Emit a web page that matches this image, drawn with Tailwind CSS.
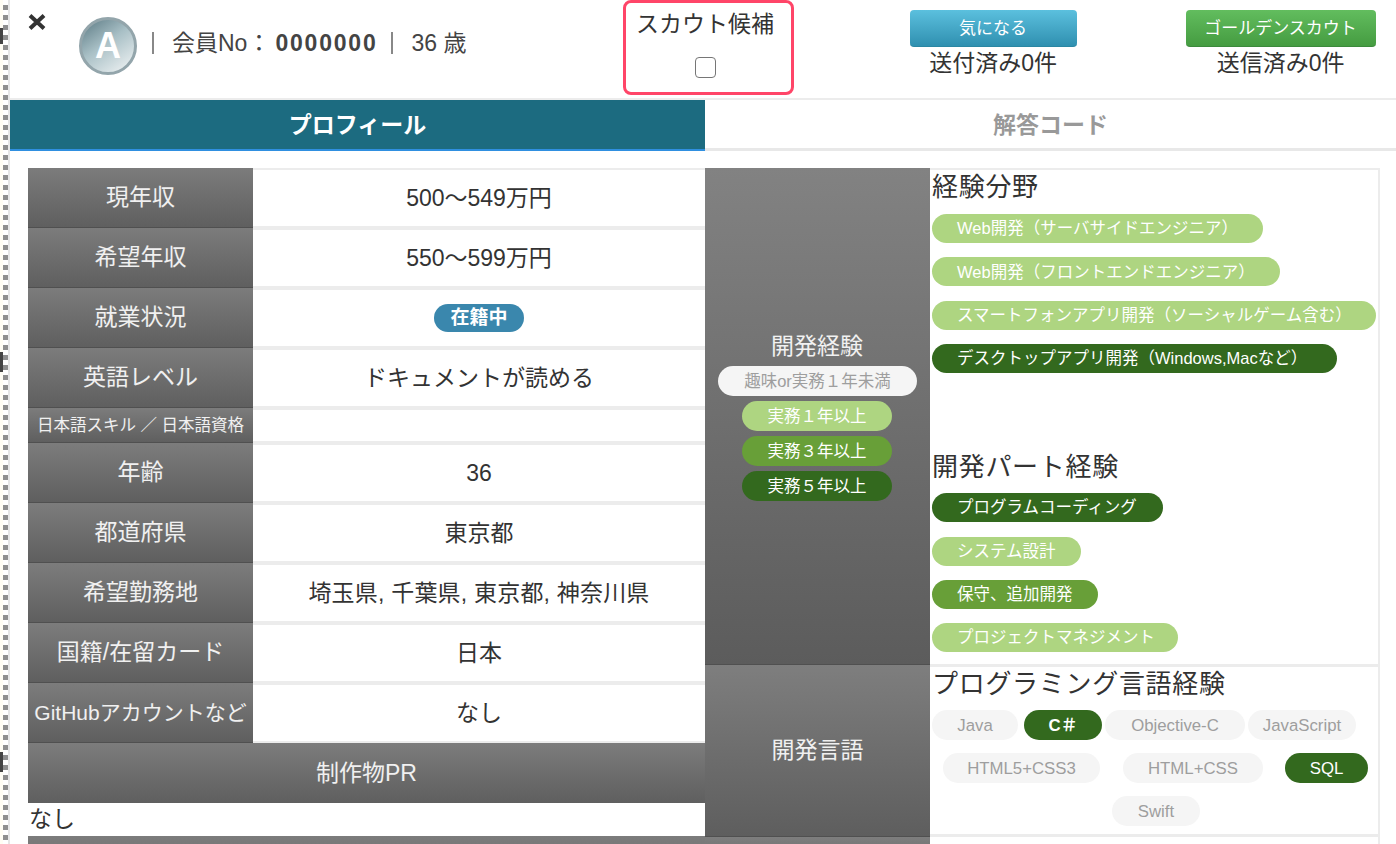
<!DOCTYPE html>
<html lang="ja">
<head>
<meta charset="utf-8">
<script src="https://cdn.jsdelivr.net/npm/@tailwindcss/browser@4"></script>
</head>
<body class="bg-white">
<div class="flex h-[844px] w-[1396px] overflow-hidden bg-white text-[#333] font-['Liberation_Sans','Noto_Sans_CJK_JP',sans-serif]">
  <div class="relative flex h-full w-[10px] shrink-0 overflow-hidden border-r-2 border-[#e6e6e6] bg-[#fffdf4]">
    <div class="ml-[3px] h-full w-[5px] bg-[repeating-linear-gradient(to_bottom,#fff_0,#fff_5px,#8f8f8f_5px,#8f8f8f_10px)]"></div>
    <span class="absolute left-0 top-[28px] h-[16px] w-[3px] bg-[#444]"></span>
    <span class="absolute left-0 top-[352px] h-[20px] w-[3px] bg-[#444]"></span>
    <span class="absolute left-0 top-[752px] h-[20px] w-[3px] bg-[#444]"></span>
  </div>
  <div class="w-[1386px] shrink-0">
    <header class="flex h-[98px] items-start">
      <svg class="ml-[18px] mt-[14px] h-[16px] w-[18px] shrink-0" viewBox="0 0 18 16"><path d="M2 1.5 L16 14.5 M16 1.5 L2 14.5" stroke="#333" stroke-width="4"/></svg>
      <div class="ml-[33px] mt-[17px] flex h-[58px] w-[58px] shrink-0 items-center justify-center rounded-full border-[3px] border-[#93a5ab] bg-[linear-gradient(145deg,#6d8a93_10%,#a9c0c6_45%,#dfe7e9_85%)] text-[36px] font-bold text-white">A</div>
      <div class="ml-[15px] mt-[30px] flex h-[26px] items-center text-[23px] leading-none text-[#444]">
        <span class="h-[22px] w-[2px] bg-[#888]"></span>
        <span class="ml-[18px]">会員No：</span>
        <span class="ml-[5px] font-bold tracking-[1.8px]">0000000</span>
        <span class="ml-[13px] h-[22px] w-[2px] bg-[#888]"></span>
        <span class="ml-[19px]">36 歳</span>
      </div>
      <div class="ml-[156px] flex h-[95px] w-[171px] shrink-0 flex-col items-center rounded-[8px] border-[3px] border-[#ff4568] bg-white pr-[6px] text-[23px]">
        <span class="mt-[6px] leading-[30px]">スカウト候補</span>
        <input type="checkbox" class="mt-[18px] h-[21px] w-[21px] appearance-none rounded-[4px] border border-[#767676] bg-white">
      </div>
      <div class="ml-[116px] mt-[10px] flex w-[167px] shrink-0 flex-col items-center">
        <button class="h-[37px] w-full rounded-[4px] border-b border-[#2a87a3] bg-gradient-to-b from-[#5bc0de] to-[#2f90b0] pt-[1px] text-[17px] text-white">気になる</button>
        <span class="mt-[1px] whitespace-nowrap text-[23px] leading-[30px]">送付済み0件</span>
      </div>
      <div class="ml-[109px] mt-[10px] flex w-[190px] shrink-0 flex-col items-center">
        <button class="h-[37px] w-full rounded-[4px] border-b border-[#3c8a3c] bg-gradient-to-b from-[#62bd5e] to-[#459c41] pt-[1px] text-[17px] text-white">ゴールデンスカウト</button>
        <span class="mt-[1px] whitespace-nowrap text-[23px] leading-[30px]">送信済み0件</span>
      </div>
    </header>
    <nav class="flex h-[53px] border-t-2 border-[#ececec] text-[23px] font-bold">
      <div class="flex w-[695px] items-center justify-center border-b-2 border-[#2f8fe0] bg-[#1c6b80] pt-[2px] text-white">プロフィール</div>
      <div class="flex flex-1 items-center justify-center border-b-[3px] border-[#e8e8e8] pt-[2px] text-[#999]">解答コード</div>
    </nav>
    <main class="ml-[18px] mt-[17px] flex">
      <section class="w-[677px] shrink-0 text-[23px]">
        <div class="flex h-[60px]"><div class="flex w-[225px] items-center justify-center border-b border-[#505050] bg-gradient-to-b from-[#7c7c7c] to-[#5f5f5f] text-white/90">現年収</div><div class="flex flex-1 items-center justify-center border-y-2 border-[#ececec]">500〜549万円</div></div>
        <div class="flex h-[60px]"><div class="flex w-[225px] items-center justify-center border-b border-[#505050] bg-gradient-to-b from-[#7c7c7c] to-[#5f5f5f] text-white/90">希望年収</div><div class="flex flex-1 items-center justify-center border-y-2 border-[#ececec]">550〜599万円</div></div>
        <div class="flex h-[60px]"><div class="flex w-[225px] items-center justify-center border-b border-[#505050] bg-gradient-to-b from-[#7c7c7c] to-[#5f5f5f] text-white/90">就業状況</div><div class="flex flex-1 items-center justify-center border-y-2 border-[#ececec]"><span class="flex h-[28px] w-[90px] items-center justify-center rounded-full bg-[#3a87ad] text-[19px] font-bold text-white">在籍中</span></div></div>
        <div class="flex h-[60px]"><div class="flex w-[225px] items-center justify-center border-b border-[#505050] bg-gradient-to-b from-[#7c7c7c] to-[#5f5f5f] text-white/90">英語レベル</div><div class="flex flex-1 items-center justify-center border-y-2 border-[#ececec]">ドキュメントが読める</div></div>
        <div class="flex h-[35px]"><div class="flex w-[225px] items-center justify-center whitespace-nowrap border-b border-[#505050] bg-gradient-to-b from-[#7c7c7c] to-[#5f5f5f] text-[16.5px] text-white/90">日本語スキル ／ 日本語資格</div><div class="flex flex-1 items-center justify-center border-y-2 border-[#ececec]"></div></div>
        <div class="flex h-[60px]"><div class="flex w-[225px] items-center justify-center border-b border-[#505050] bg-gradient-to-b from-[#7c7c7c] to-[#5f5f5f] text-white/90">年齢</div><div class="flex flex-1 items-center justify-center border-y-2 border-[#ececec]">36</div></div>
        <div class="flex h-[60px]"><div class="flex w-[225px] items-center justify-center border-b border-[#505050] bg-gradient-to-b from-[#7c7c7c] to-[#5f5f5f] text-white/90">都道府県</div><div class="flex flex-1 items-center justify-center border-y-2 border-[#ececec]">東京都</div></div>
        <div class="flex h-[60px]"><div class="flex w-[225px] items-center justify-center border-b border-[#505050] bg-gradient-to-b from-[#7c7c7c] to-[#5f5f5f] text-white/90">希望勤務地</div><div class="flex flex-1 items-center justify-center border-y-2 border-[#ececec] tracking-[0.2px]">埼玉県, 千葉県, 東京都, 神奈川県</div></div>
        <div class="flex h-[60px]"><div class="flex w-[225px] items-center justify-center border-b border-[#505050] bg-gradient-to-b from-[#7c7c7c] to-[#5f5f5f] text-white/90">国籍/在留カード</div><div class="flex flex-1 items-center justify-center border-y-2 border-[#ececec]">日本</div></div>
        <div class="flex h-[60px]"><div class="flex w-[225px] items-center justify-center whitespace-nowrap border-b border-[#505050] bg-gradient-to-b from-[#7c7c7c] to-[#5f5f5f] text-[21px] text-white/90">GitHubアカウントなど</div><div class="flex flex-1 items-center justify-center border-y-2 border-[#ececec]">なし</div></div>
        <div class="flex h-[60px] items-center justify-center bg-gradient-to-b from-[#7c7c7c] to-[#5f5f5f] text-white/90">制作物PR</div>
        <div class="flex h-[33px] items-center pl-[1px]">なし</div>
        <div class="h-[40px] bg-gradient-to-b from-[#7c7c7c] to-[#6a6a6a]"></div>
      </section>
      <section class="w-[675px] shrink-0">
        <div class="flex h-[496px]">
          <div class="flex w-[225px] shrink-0 flex-col items-center bg-gradient-to-b from-[#828282] to-[#5c5c5c] pr-[1px] pt-[160px]">
            <span class="text-[23px] leading-[36px] text-white/90">開発経験</span>
            <span class="ml-[1px] mt-[2px] flex h-[30px] w-[199px] items-center justify-center rounded-full bg-[#f5f5f5] text-[16.5px] text-[#9e9e9e]">趣味or実務１年未満</span>
            <span class="mt-[5px] flex h-[30px] w-[150px] items-center justify-center rounded-full bg-[#aed581] text-[16.5px] text-white">実務１年以上</span>
            <span class="mt-[5px] flex h-[30px] w-[150px] items-center justify-center rounded-full bg-[#689f38] text-[16.5px] text-white">実務３年以上</span>
            <span class="mt-[5px] flex h-[30px] w-[150px] items-center justify-center rounded-full bg-[#33691e] text-[16.5px] text-white">実務５年以上</span>
          </div>
          <div class="flex-1 border-r-2 border-t-2 border-[#ececec] pl-[2px]">
            <h3 class="text-[26px] leading-[34px] tracking-[0.7px]">経験分野</h3>
            <div class="mt-[10px] flex flex-col items-start gap-[14.4px] text-[16.5px] text-white">
              <span class="flex h-[29px] w-[331px] items-center whitespace-nowrap rounded-full bg-[#aed581] pl-[25px]">Web開発（サーバサイドエンジニア）</span>
              <span class="flex h-[29px] w-[348px] items-center whitespace-nowrap rounded-full bg-[#aed581] pl-[25px]">Web開発（フロントエンドエンジニア）</span>
              <span class="flex h-[29px] w-[444px] items-center whitespace-nowrap rounded-full bg-[#aed581] pl-[25px]">スマートフォンアプリ開発（ソーシャルゲーム含む）</span>
              <span class="flex h-[29px] w-[405px] items-center whitespace-nowrap rounded-full bg-[#33691e] pl-[25px]">デスクトップアプリ開発（Windows,Macなど）</span>
            </div>
            <h3 class="mt-[77px] text-[26px] leading-[34px] tracking-[0.7px]">開発パート経験</h3>
            <div class="mt-[9px] flex flex-col items-start gap-[14.4px] text-[16.5px] text-white">
              <span class="flex h-[29px] w-[231px] items-center whitespace-nowrap rounded-full bg-[#33691e] pl-[25px]">プログラムコーディング</span>
              <span class="flex h-[29px] w-[149px] items-center whitespace-nowrap rounded-full bg-[#aed581] pl-[25px]">システム設計</span>
              <span class="flex h-[29px] w-[166px] items-center whitespace-nowrap rounded-full bg-[#689f38] pl-[25px]">保守、追加開発</span>
              <span class="flex h-[29px] w-[246px] items-center whitespace-nowrap rounded-full bg-[#aed581] pl-[25px]">プロジェクトマネジメント</span>
            </div>
          </div>
        </div>
        <div class="flex h-[173px]">
          <div class="flex w-[225px] shrink-0 items-center justify-center border-y border-[#505050] bg-gradient-to-b from-[#7e7e7e] to-[#5e5e5e] text-[23px] text-white/90">開発言語</div>
          <div class="flex-1 border-y-[3px] border-r-2 border-[#ececec] pl-[2px]">
            <h3 class="text-[26px] leading-[34px] tracking-[0.7px]">プログラミング言語経験</h3>
            <div class="mt-[9px] flex text-[16.8px] text-[#9e9e9e]">
              <span class="flex h-[30px] w-[86px] items-center justify-center rounded-full bg-[#f5f5f5] pt-[1px]">Java</span>
              <span class="ml-[6px] flex h-[30px] w-[78px] items-center justify-center rounded-full bg-[#33691e] pt-[1px] font-bold text-white">C＃</span>
              <span class="ml-[3px] flex h-[30px] w-[140px] items-center justify-center rounded-full bg-[#f5f5f5] pt-[1px]">Objective-C</span>
              <span class="ml-[3px] flex h-[30px] w-[108px] items-center justify-center rounded-full bg-[#f5f5f5] pt-[1px]">JavaScript</span>
            </div>
            <div class="ml-[11px] mt-[13px] flex text-[16.8px] text-[#9e9e9e]">
              <span class="flex h-[30px] w-[157px] items-center justify-center rounded-full bg-[#f5f5f5] pt-[1px]">HTML5+CSS3</span>
              <span class="ml-[23px] flex h-[30px] w-[140px] items-center justify-center rounded-full bg-[#f5f5f5] pt-[1px]">HTML+CSS</span>
              <span class="ml-[22px] flex h-[30px] w-[83px] items-center justify-center rounded-full bg-[#33691e] pt-[1px] text-white">SQL</span>
            </div>
            <div class="ml-[180px] mt-[13px] flex text-[16.8px] text-[#9e9e9e]">
              <span class="flex h-[30px] w-[88px] items-center justify-center rounded-full bg-[#f5f5f5] pt-[1px]">Swift</span>
            </div>
          </div>
        </div>
        <div class="flex h-[20px]">
          <div class="w-[225px] bg-gradient-to-b from-[#7e7e7e] to-[#6e6e6e]"></div>
          <div class="flex-1 border-r-2 border-[#ececec]"></div>
        </div>
      </section>
    </main>
  </div>
</div>
</body>
</html>
